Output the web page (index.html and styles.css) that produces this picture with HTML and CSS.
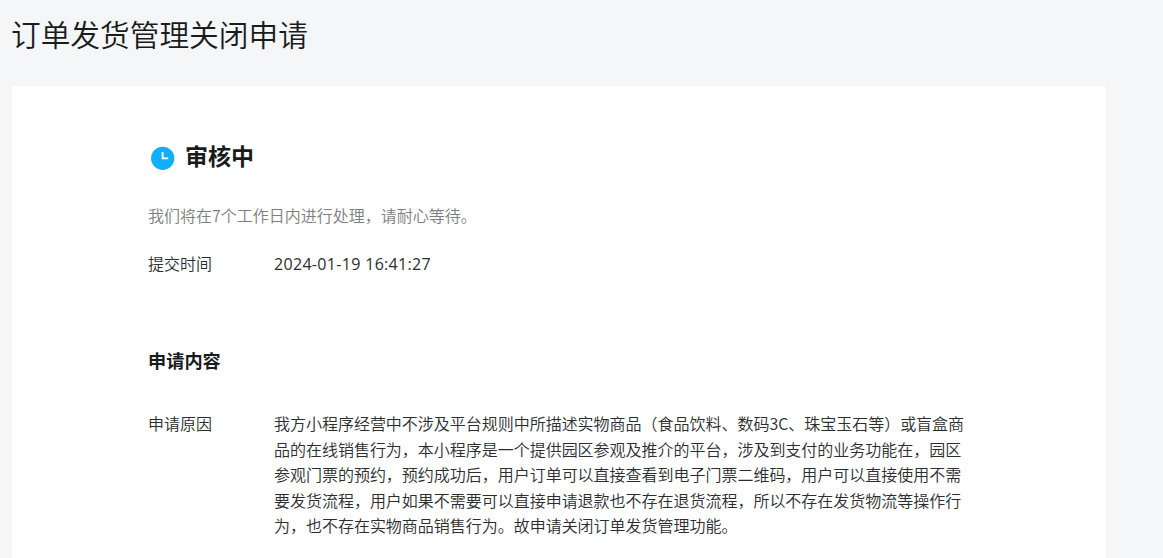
FILE: index.html
```
<!DOCTYPE html>
<html lang="zh-CN">
  <head>
    <meta charset="utf-8">
    <title>订单发货管理关闭申请</title>
    <link rel="stylesheet" href="styles.css">
  </head>
  <body>
    <h1 class="page-title">订单发货管理关闭申请</h1>
    <div class="card">
      <div class="status">
        <svg class="status-icon" viewBox="0 0 24 24">
          <circle cx="11.7" cy="12.3" r="11.6" fill="#10aeff"/>
          <path d="M11.6 6v6.3h5.6" fill="none" stroke="#fff" stroke-width="1.8"/>
        </svg>
        <h2>审核中</h2>
      </div>
      <p class="tips">我们将在7个工作日内进行处理，请耐心等待。</p>
      <div class="row">
        <div class="label">提交时间</div>
        <div class="value time">2024-01-19 16:41:27</div>
      </div>
      <h3>申请内容</h3>
      <div class="row">
        <div class="label">申请原因</div>
        <div class="value reason">
          <span class="line">我方小程序经营中不涉及平台规则中所描述实物商品（食品饮料、数码3C、珠宝玉石等）或盲盒商</span>
          <span class="line">品的在线销售行为，本小程序是一个提供园区参观及推介的平台，涉及到支付的业务功能在，园区</span>
          <span class="line">参观门票的预约，预约成功后，用户订单可以直接查看到电子门票二维码，用户可以直接使用不需</span>
          <span class="line">要发货流程，用户如果不需要可以直接申请退款也不存在退货流程，所以不存在发货物流等操作行</span>
          <span class="line">为，也不存在实物商品销售行为。故申请关闭订单发货管理功能。</span>
        </div>
      </div>
    </div>
  </body>
</html>
```
FILE: styles.css
```
*{
  box-sizing:border-box;
}
body{
  margin:0;
  background-color:#f5f6f8;
  color:#1a1b1c;
  font-family:"Noto Sans CJK SC", sans-serif;
  font-size:16px;
  font-weight:350;
  line-height:26px;
}
h1, h2, h3, p{
  margin:0;
}
.page-title{
  padding:12px 0 0 11px;
  height:86px;
  font-size:29.7px;
  line-height:44px;
  font-weight:350;
}
.card{
  width:1094px;
  height:472px;
  margin-left:12px;
  padding:51px 137px 0 136px;
  background-color:#fff;
  border-radius:4px 4px 0 0;
}
.status{
  display:flex;
  align-items:center;
  height:36px;
  padding-left:3px;
}
.status-icon{
  width:24px;
  height:24px;
  margin:6px 10px 0 0;
}
.status h2{
  font-size:23px;
  line-height:36px;
  font-weight:700;
}
.tips{
  margin-top:29px;
  color:#7d7e80;
}
.row{
  display:flex;
  margin-top:22px;
  color:#2c2d2e;
}
.label{
  width:126px;
  flex-shrink:0;
}
.time{
  padding-top:1px;
  margin-bottom:-1px;
  font-family:"Open Sans", sans-serif;
  font-weight:400;
  letter-spacing:.32px;
}
h3{
  margin-top:71px;
  font-size:18.2px;
  font-weight:700;
}
h3 + .row{
  margin-top:37px;
}
.reason{
  padding-top:1px;
}
.line{
  display:block;
  line-height:25.6px;
  letter-spacing:-.02px;
  white-space:nowrap;
}
```
